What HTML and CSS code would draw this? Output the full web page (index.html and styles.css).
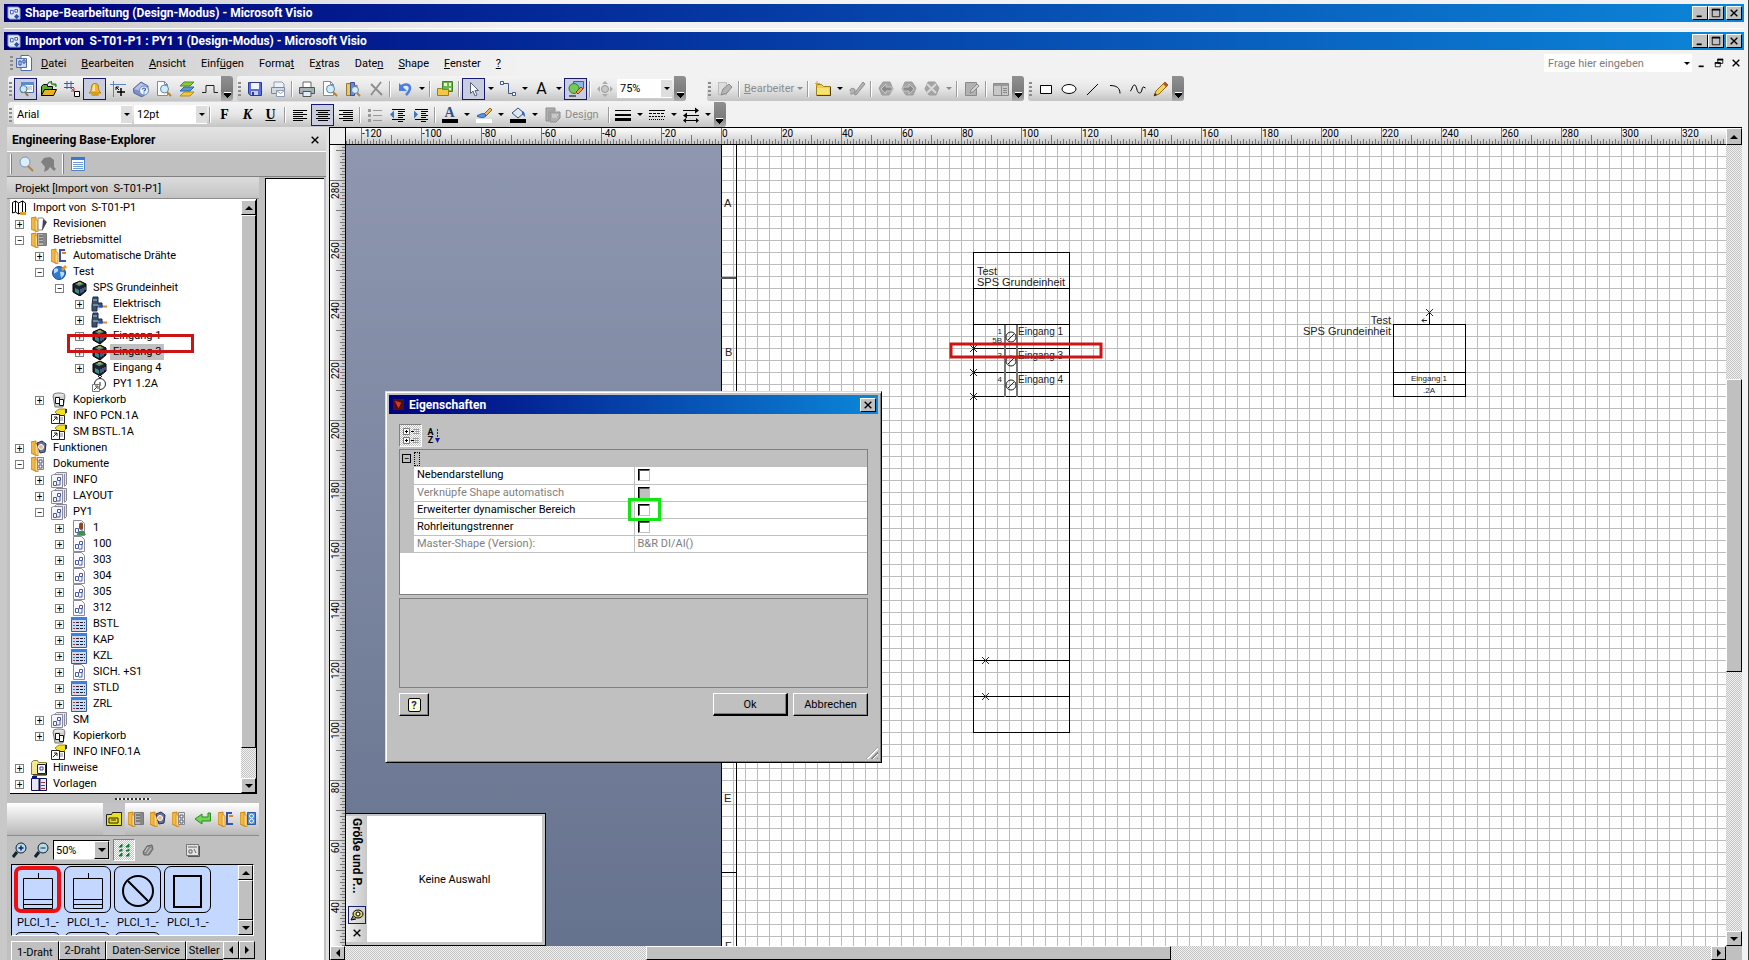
FILE: index.html
```html
<!DOCTYPE html>
<html lang="de">
<head>
  <meta charset="UTF-8" />
  <meta name="viewport" content="width=device-width, initial-scale=1.0" />
  <title>Import von S-T01-P1 - Microsoft Visio</title>
  <link rel="stylesheet" href="styles.css">
</head>
<body>
  <!-- Icon set -->
  <svg class="icon-defs" aria-hidden="true">
    <symbol id="i-visio" viewBox="0 0 16 16"><path d="M1 1h12l2 2v12H3l-2-2z" fill="#dfe6f6" stroke="#6f83b5"/><path d="M4 5h3v4H4zM9 4h3v3H9z" fill="#fff" stroke="#2c4ea0"/><path d="M11 9l3 3-3 3-3-3z" fill="#2c4ea0"/></symbol>
    <symbol id="i-docvisio" viewBox="0 0 16 16"><path d="M5 .5h8l2.500 2.500v12.500H5z" fill="#fff" stroke="#4c6cb0"/><path d="M.5 3.500h10v9H.5z" fill="#c9d7f3" stroke="#4c6cb0"/><path d="M3 6h2v4H3zM7 5h2v3H7z" fill="#fff" stroke="#2a459a"/></symbol>
    <symbol id="i-findwin" viewBox="0 0 16 16"><path d="M3.500 1.500h12v10h-12z" fill="#fff" stroke="#4a70b0"/><path d="M3 1h13v3H3z" fill="#5b8ad0"/><path d="M9 6h5M9 8h5" stroke="#9ab"/><circle cx="5.500" cy="8" r="3.500" fill="#cfe9fb" stroke="#4a7a9a"/><path d="M7 11l3 4" stroke="#a07030" stroke-width="2"/></symbol>
    <symbol id="i-open" viewBox="0 0 16 16"><path d="M.5 14.500v-9l2-2h4v2h5v3" fill="#5ab030" stroke="#000"/><path d="M.5 14.500l3-6h12l-3 6z" fill="#e6b422" stroke="#000"/><path d="M6 4l2-3h3l-1-1m1 1l-1 2M10 3h5v3" fill="#7c3" stroke="#263"/></symbol>
    <symbol id="i-snap" viewBox="0 0 16 16"><path d="M3 0v8M7 0v8M0 2.500h10M0 6.500h10" stroke="#3a5aa8"/><path d="M6 6l4 4M10 7v3H7" stroke="#d33" fill="none"/><path d="M10.500 10.500h5v5h-5z" fill="#fff" stroke="#000"/></symbol>
    <symbol id="i-bell" viewBox="0 0 16 16"><path d="M2 12c3-2 2-5 3-8 1-2 5-2 6 0 1 3 0 6 3 8z" fill="#f2b62c" stroke="#b87a10"/><path d="M6 5c0-1 1-2 2-2v7H5z" fill="#fde69a"/><ellipse cx="8" cy="13.500" rx="4" ry="1.500" fill="#d99a1c"/></symbol>
    <symbol id="i-guide" viewBox="0 0 16 16"><path d="M0 3.500h16M3.500 0v16" stroke="#5b83c8"/><path d="M6 6h3M6 6v3M6 6l3 3" stroke="#000" fill="none"/><path d="M11 7v8M7 11h8" stroke="#000" stroke-width="1.500"/></symbol>
    <symbol id="i-book" viewBox="0 0 16 16"><path d="M0 8l8-7 7 4v6l-6 5-8-4z" fill="#7d90cc" stroke="#56699f"/><path d="M1 8l7-6 6 3-6 5z" fill="#b6c2e8"/><circle cx="11" cy="9.500" r="4.500" fill="#eef4ff" stroke="#6d83bd"/><path d="M9.500 8.500c0-2 3-2 3 0 0 1-1.500 1-1.500 2m0 1v1" stroke="#2a57c0" fill="none" stroke-width="1.200"/></symbol>
    <symbol id="i-preview" viewBox="0 0 16 16"><path d="M1.500.5h7l3 3v11h-10z" fill="#fff" stroke="#7a8aa8"/><path d="M8.500.5v3h3" fill="none" stroke="#7a8aa8"/><circle cx="8.500" cy="8" r="4" fill="#d3ecfa" stroke="#5c86a3"/><path d="M11 11l4 4" stroke="#b98232" stroke-width="2"/></symbol>
    <symbol id="i-layers" viewBox="0 0 16 16"><path d="M1 15l4-4h10l-4 4z" fill="#f0c93c" stroke="#b38b10"/><path d="M1 10l4-4h10l-4 4z" fill="#5b95d8" stroke="#2c64a8"/><path d="M1 5l4-4h10l-4 4z" fill="#8cc83c" stroke="#4f8a18"/></symbol>
    <symbol id="i-pulse" viewBox="0 0 16 16"><path d="M0 11.500h4v-7h8v7h4" fill="none" stroke="#222"/></symbol>
    <symbol id="i-save" viewBox="0 0 16 16"><path d="M1.500 1.500h13v13h-11l-2-2z" fill="#5a6fd8" stroke="#2b3a94"/><path d="M4 2h8v6H4z" fill="#f2f4ff"/><path d="M4 10h7v4H4z" fill="#c9cff0"/><path d="M5 11h2v3H5z" fill="#2b3a94"/></symbol>
    <symbol id="i-mailprint" viewBox="0 0 16 16"><path d="M4 6V1h8l2 2v4" fill="#eef2fa" stroke="#8d9bb4"/><path d="M1.500 6.500h13v6h-13z" fill="#d4d8e0" stroke="#7d8797"/><path d="M6.500 9.500h8v6h-8z" fill="#fff" stroke="#8d9bb4"/><path d="M6.500 9.500l4 3 4-3" fill="none" stroke="#8d9bb4"/></symbol>
    <symbol id="i-print" viewBox="0 0 16 16"><path d="M4 6V1h8v5" fill="#fff" stroke="#666"/><path d="M.5 6.500h15v6H.5z" fill="#a9b2b9" stroke="#4c555c"/><path d="M4 10.500h8v5H4z" fill="#dfeffc" stroke="#555"/><path d="M12 8h2" stroke="#4d4"/></symbol>
    <symbol id="i-research" viewBox="0 0 16 16"><path d="M1.500 2.500h4v12h-4z" fill="#e8c860" stroke="#9a7a28"/><path d="M5.500 1.500h4v13h-4z" fill="#7088c8" stroke="#3a5098"/><path d="M9.500 4h3v6h-3z" fill="#c86040"/><circle cx="10" cy="9" r="3.500" fill="#d3ecfa" stroke="#5c86a3"/><path d="M12 12l3 3" stroke="#b98232" stroke-width="2"/></symbol>
    <symbol id="i-delete" viewBox="0 0 16 16"><path d="M3 3l11 11M13 1L3 14" stroke="#8c8c8c" stroke-width="1.800" fill="none"/></symbol>
    <symbol id="i-undo" viewBox="0 0 16 16"><path d="M4 6c3-4 9-3 9 1 0 3-2 5-4 7" fill="none" stroke="#4a7fe0" stroke-width="2.500"/><path d="M2 2v8h8z" fill="#4a7fe0"/></symbol>
    <symbol id="i-shapes" viewBox="0 0 16 16"><path d="M5.500.5h10v10h-10z" fill="#6cb84c" stroke="#3e7f26"/><path d="M7 2h3v3H7zM12 2h2v3h-2zM12 7h2v2h-2z" fill="#e8f8d8"/><path d="M.5 7.500h4l1 1h6v6H.5z" fill="#f2c648" stroke="#a87c14"/></symbol>
    <symbol id="i-pointer" viewBox="0 0 16 16"><path d="M4.500 1.500v11l2.500-2.500 2 5 2-1-2-4.500h3.500z" fill="#fff" stroke="#566080"/></symbol>
    <symbol id="i-connector" viewBox="0 0 16 16"><path d="M4 2.500h4.500v10h4" fill="none" stroke="#3c5a90"/><path d="M.5.500h3v3h-3zM12.500 11.500h3v3h-3z" fill="#fff" stroke="#3c5a90"/></symbol>
    <symbol id="i-geom" viewBox="0 0 16 16"><path d="M5.500.5h10v7h-10z" fill="#8eb4ee" stroke="#3560a8"/><circle cx="6" cy="7.500" r="5" fill="#74c95a" stroke="#33801f"/><path d="M8 11l5-5 2 2-5 5z" fill="#f0a040" stroke="#a03818"/><path d="M1 15h7" stroke="#000"/></symbol>
    <symbol id="i-pan" viewBox="0 0 16 16"><path d="M8 0l3 3H5zM8 16l3-3H5zM0 8l3-3v6zM16 8l-3-3v6z" fill="#aaa"/><circle cx="8" cy="8" r="3.500" fill="#c8c8c8" stroke="#999"/></symbol>
    <symbol id="i-ink" viewBox="0 0 16 16"><path d="M1.500 1.500h8v12h-8z" fill="#ddd" stroke="#999" stroke-dasharray="1 1"/><path d="M4 14l2-6 6-5 3 3-5 6z" fill="#b4b4b4" stroke="#8c8c8c"/></symbol>
    <symbol id="i-folder" viewBox="0 0 16 16"><path d="M1.500 3.500h5l2 2h7v9h-14z" fill="#f0d040" stroke="#a08018"/><path d="M2 7h12v6H2z" fill="#f6e272"/><path d="M15.500 6v8.500H2" fill="none" stroke="#4c4010"/><path d="M2 0v5M0 2.500h5" stroke="#f0a020"/></symbol>
    <symbol id="i-inkpen" viewBox="0 0 16 16"><path d="M1 10c0-4 6-3 5 0s-4 4-5 2M5 13L14 1l2 2-9 11z" fill="#b4b4b4" stroke="#8c8c8c"/></symbol>
    <symbol id="i-hex" viewBox="0 0 16 16"><path d="M4 1h7l4 6-3 7H5L1 8z" fill="#a4a4a4" stroke="#9c9c9c"/><path d="M2 6h6V3l5 5-5 5v-3H2z" fill="#8a8a8a" stroke="#c8c8c8"/></symbol>
    <symbol id="i-hexx" viewBox="0 0 16 16"><path d="M4 1h7l4 6-3 7H5L1 8z" fill="#a4a4a4" stroke="#9c9c9c"/><path d="M3 3l9 9M12 3l-9 9" stroke="#d8d8d8" stroke-width="2"/></symbol>
    <symbol id="i-note" viewBox="0 0 16 16"><path d="M1.500 1.500h11v13h-11z" fill="#b2b2b2" stroke="#8a8a8a"/><path d="M6 12l1-3 6-6 2 2-6 6z" fill="#d0d0d0" stroke="#8a8a8a"/></symbol>
    <symbol id="i-pane" viewBox="0 0 16 16"><path d="M.5 2.500h15v12H.5z" fill="#c8c8c8" stroke="#8a8a8a"/><path d="M1 3h14v2H1z" fill="#9a9a9a"/><path d="M8.500 5v9M10 7.500h4M10 9.500h4M10 11.500h4" stroke="#8a8a8a"/></symbol>
    <symbol id="i-rect" viewBox="0 0 16 16"><path d="M2.500 4.500h11v8h-11z" fill="#fff" stroke="#000"/></symbol>
    <symbol id="i-ellipse" viewBox="0 0 16 16"><ellipse cx="8" cy="8" rx="7" ry="4.500" fill="#fff" stroke="#000"/></symbol>
    <symbol id="i-line" viewBox="0 0 16 16"><path d="M3 14L14 3" stroke="#000"/></symbol>
    <symbol id="i-arc" viewBox="0 0 16 16"><path d="M3 4.500c6 0 10 2 10 8" stroke="#000" fill="none"/></symbol>
    <symbol id="i-wave" viewBox="0 0 16 16"><path d="M0 10c2 0 2-6 4.500-6s2 8 5 8 2-6 4-6l2 1" stroke="#000" fill="none"/></symbol>
    <symbol id="i-pencil" viewBox="0 0 16 16"><path d="M1 15l2-5 9-9 3 3-9 9z" fill="#f4d25c" stroke="#8c6a10"/><path d="M12 1l3 3-2 2-3-3z" fill="#c05030"/><path d="M1 15l1-3 2 2z" fill="#222"/></symbol>
    <symbol id="i-left" viewBox="0 0 16 16"><path d="M1 3.500h14M1 5.500h10M1 7.500h14M1 9.500h10M1 11.500h14M1 13.500h10" stroke="#000"/></symbol>
    <symbol id="i-center" viewBox="0 0 16 16"><path d="M1 3.500h14M3 5.500h10M1 7.500h14M3 9.500h10M1 11.500h14M3 13.500h10" stroke="#000"/></symbol>
    <symbol id="i-right" viewBox="0 0 16 16"><path d="M1 3.500h14M5 5.500h10M1 7.500h14M5 9.500h10M1 11.500h14M5 13.500h10" stroke="#000"/></symbol>
    <symbol id="i-bullets" viewBox="0 0 16 16"><path d="M6 3.500h9M6 8.500h9M6 13.500h9" stroke="#999"/><path d="M1 2h3v3H1zM1 7h3v3H1zM1 12h3v3H1z" fill="#999"/></symbol>
    <symbol id="i-indentl" viewBox="0 0 16 16"><path d="M2 2.500h13M8 4.500h7M8 6.500h5M8 8.500h7M8 10.500h5M2 12.500h13M8 14.500h5" stroke="#000"/><path d="M0 7.500l4-4v8z" fill="#3a78b8"/></symbol>
    <symbol id="i-indentr" viewBox="0 0 16 16"><path d="M2 2.500h13M8 4.500h7M8 6.500h5M8 8.500h7M8 10.500h5M2 12.500h13M8 14.500h5" stroke="#000"/><path d="M5 7.500l-4-4v8z" fill="#3a78b8"/></symbol>
    <symbol id="i-brush" viewBox="0 0 16 16"><path d="M8 7l6-6 2 2-6 6z" fill="#e8b860" stroke="#906020"/><path d="M1 9c3-2 6-3 8-2l1 2c-2 2-6 2-9 0z" fill="#5b95e8" stroke="#2c5cb0"/><path d="M0 12h16v4H0z" fill="#fff"/></symbol>
    <symbol id="i-fill" viewBox="0 0 16 16"><path d="M2 6l6-5 6 5-6 5z" fill="#dfe9f6" stroke="#3a5078"/><path d="M12 4c3 1 3 4 3 6l-3-3z" fill="#2c64c0"/><path d="M0 12h16v4H0z"/></symbol>
    <symbol id="i-design" viewBox="0 0 16 16"><path d="M1 1h9v3H4v10H1zM5 5h10v6l-4 4H5z" fill="#b0b0b0" stroke="#8e8e8e"/><path d="M7 8h6M7 10h5" stroke="#e0e0e0"/></symbol>
    <symbol id="i-weight" viewBox="0 0 16 16"><path d="M0 3.500h16" stroke="#000"/><path d="M0 8h16" stroke="#000" stroke-width="2"/><path d="M0 12.500h16" stroke="#000" stroke-width="3"/></symbol>
    <symbol id="i-dash" viewBox="0 0 16 16"><path d="M0 3.500h16" stroke="#000"/><path d="M0 6.500h16" stroke="#000" stroke-dasharray="3 1"/><path d="M0 9.500h16" stroke="#000" stroke-dasharray="2 1"/><path d="M0 12.500h16" stroke="#000" stroke-dasharray="1 1"/></symbol>
    <symbol id="i-ends" viewBox="0 0 16 16"><path d="M0 3.500h14M2 8.500h14M1 13.500h14" stroke="#000"/><path d="M16 3.500l-4-3v6zM0 8.500l4-3v6zM16 13.500l-3-2.500v5zM0 13.500l3-2.500v5z"/></symbol>
    <symbol id="i-zoom" viewBox="0 0 16 16"><circle cx="7" cy="6" r="5" fill="#d9effc" stroke="#7a98b0"/><path d="M10 10l5 5" stroke="#b98232" stroke-width="2"/></symbol>
    <symbol id="i-blob" viewBox="0 0 16 16"><path d="M1 6l3-4 6-1 4 3v7l2 2-2 2-4-4-2 3-4 2 1-5z" fill="#808080"/></symbol>
    <symbol id="i-form" viewBox="0 0 16 16"><path d="M1.500 1.500h13v13h-13z" fill="#fff" stroke="#4f86c6"/><path d="M1 1h14v3H1z" fill="#3a78d0"/><path d="M3 6.500h10M3 8.500h10M3 10.500h10M3 12.500h10" stroke="#6fa0d8"/></symbol>
    <!-- tree icons -->
    <symbol id="t-project" viewBox="0 0 16 16"><path d="M1.500 2.500l3-1.500 3 2 4-2 3 2v11l-3-2-4 2-3-2-3 1z" fill="#fff" stroke="#000"/><path d="M4.500 1v11M7.500 3v11M11.500 1v11" stroke="#000"/><path d="M9 12h6v3H9z" fill="#e0a030"/></symbol>
    <symbol id="t-folder" viewBox="0 0 16 16"><path d="M0 2l5-1v11l1 4-6-3z" fill="#f4b840" stroke="#c88418"/><path d="M4 3l3 2v11l-3-2z" fill="#fbd988" stroke="#d89a30"/></symbol>
    <symbol id="t-rev" viewBox="0 0 16 16"><use href="#t-folder"/><path d="M7 2h5l3 4-4 8H7z" fill="#fff" stroke="#888"/><path d="M12 3l4 3-5 9z" fill="#445"/></symbol>
    <symbol id="t-equip" viewBox="0 0 16 16"><use href="#t-folder"/><path d="M6.500 1.500h9v12h-9z" fill="#b4b4b4" stroke="#777"/><path d="M8 4h6M8 7h6M8 10h6" stroke="#444"/><path d="M12 2h3v11h-3z" fill="#888"/></symbol>
    <symbol id="t-wire" viewBox="0 0 16 16"><use href="#t-folder"/><path d="M8 2h6M9 2v11h6" fill="none" stroke="#3850b0" stroke-width="2"/><path d="M11 5h4" stroke="#e08030" stroke-width="2"/></symbol>
    <symbol id="t-globe" viewBox="0 0 16 16"><circle cx="8" cy="9" r="6.500" fill="#2f78d0" stroke="#1d4c92"/><path d="M3 5c3-2 5 0 4 2s-3 1-4 3zM9 8c3-1 5 0 4 3l-3 3z" fill="#b8dcf4"/><path d="M10 5l4-4 2 2-4 4z" fill="#e89828"/></symbol>
    <symbol id="t-device" viewBox="0 0 16 16"><path d="M2 4l7-3 6 3v7l-6 5-7-4z" fill="#18242c" stroke="#000"/><path d="M4 4l5-2 4 2-5 2z" fill="#5c8c78"/><path d="M4 8l4 2v4l-4-2z" fill="#3a8888"/><path d="M10 9v4M12 8v4M14 7v3" stroke="#7c88e0"/><path d="M7 3h3" stroke="#e0c838"/></symbol>
    <symbol id="t-elec" viewBox="0 0 16 16"><path d="M2 1h5v6h4v4H6v4H1V9z" fill="#38506c" stroke="#1c2a3c"/><path d="M2 4h4M2 9h5M8 9v5" stroke="#aec4da"/><path d="M8 10.500h4" stroke="#3050c0" stroke-width="2"/><path d="M12 10.500h4" stroke="#e08830" stroke-width="2"/></symbol>
    <symbol id="t-ref" viewBox="0 0 16 16"><circle cx="9" cy="8" r="5.500" fill="#fff" stroke="#222"/><path d="M7 0l2 2 2-2M9 6v4" stroke="#222" fill="none"/><path d="M1.500 8.500h7v7h-7z" fill="#fff" stroke="#777"/><path d="M3 14l3-3m-2-1h3v3" stroke="#444" fill="none"/></symbol>
    <symbol id="t-bin" viewBox="0 0 16 16"><ellipse cx="8" cy="3" rx="6" ry="2" fill="#e6e6e6" stroke="#777"/><path d="M2 4l2 11h8l2-11" fill="#d0d0d0" stroke="#777"/><path d="M4.500 5.500h4v6h-4zM8.500 7.500h4v6h-4z" fill="#fff" stroke="#111"/></symbol>
    <symbol id="t-link" viewBox="0 0 16 16"><path d="M4 4l4-3h7v4l-3 3-5-1z" fill="#f4e020" stroke="#a08c10"/><path d="M14 1h2v4h-2z" fill="#1c2c90"/><path d="M8.500 7.500h5v8h-5z" fill="#fff" stroke="#222"/><path d="M9 10h3M9 12h3" stroke="#88a"/><path d="M.5 6.500h8v9h-8z" fill="#fff" stroke="#222"/><path d="M2 13l4-4m-3 0h3v3" stroke="#222" fill="none"/></symbol>
    <symbol id="t-func" viewBox="0 0 16 16"><use href="#t-folder"/><path d="M6 3l5-2 4 3-1 8-5 1z" fill="#6a7498" stroke="#29304e"/><circle cx="10" cy="7" r="2.500" fill="#e2b8a0" stroke="#fff"/></symbol>
    <symbol id="t-docs" viewBox="0 0 16 16"><use href="#t-folder"/><path d="M6.500 1.500h6v12h-6z" fill="#e4e6f2" stroke="#888"/><path d="M8 4h3v3H8zM8 9h3v3H8z" fill="#fff" stroke="#557"/></symbol>
    <symbol id="t-sheets" viewBox="0 0 16 16"><path d="M3.500 2.500l2-2h10v12l-2 2" fill="#e4e4ea" stroke="#8a8a98"/><path d="M13.500 2v12" stroke="#8a8a98"/><path d="M.5 3.500l2-1h9v13H.5z" fill="#f4f4fa" stroke="#8a8a98"/><path d="M2.500 9.500h3v4h-3zM6.500 5.500h3v3h-3zM9 9v4H6" fill="none" stroke="#4a5aa0"/></symbol>
    <symbol id="t-sheet" viewBox="0 0 16 16"><path d="M2.500.5h8l3 3v12h-11z" fill="#fbfbfd" stroke="#8a8a98"/><path d="M4.500 8.500h3v4h-3zM8.500 5.500h3v3h-3zM11 9v4H8" fill="none" stroke="#4a5aa0"/></symbol>
    <symbol id="t-user" viewBox="0 0 16 16"><use href="#t-sheet"/><path d="M8 4c1-2 4-2 4 0v5l-3 1z" fill="#8a4a28"/><path d="M6 15l1-4h6l2 4z" fill="#3c9050"/></symbol>
    <symbol id="t-list" viewBox="0 0 16 16"><path d="M.5 1.500h15v14H.5z" fill="#c8dcf8" stroke="#2a5cb0"/><path d="M0 1h16v3H0z" fill="#3f7fe0"/><path d="M5 6.500h9M5 9.500h9M5 12.500h9" stroke="#223" stroke-dasharray="3 1"/><path d="M2 6.500h2M2 12.500h2" stroke="#c03030"/><path d="M2 9.500h2" stroke="#309040"/></symbol>
    <symbol id="t-hint" viewBox="0 0 16 16"><path d="M.5 2.500l2-2h4l1 2h8v12H.5z" fill="#f4e890" stroke="#8c8030"/><path d="M6.500 4.500h8v9h-8z" fill="#fff" stroke="#222"/><path d="M9 7h3v3H9z" fill="none" stroke="#4040b0"/><path d="M15.500 3v12H2" fill="none" stroke="#000"/></symbol>
    <symbol id="t-templ" viewBox="0 0 16 16"><path d="M.5 2.500h15v12H.5z" fill="#e8e8f4" stroke="#101050"/><path d="M1 0h5v3H1z" fill="#101080"/><path d="M8.500 3v11" stroke="#101050" stroke-width="2"/><path d="M10 6.500h4M10 9.500h4M10 12.500h4" stroke="#a03030"/></symbol>
    <symbol id="i-stencil" viewBox="0 0 16 16"><path d="M.5 3.500h5l1-2h9v13H.5z" fill="#e8e020" stroke="#222"/><path d="M3 7h9v5H3zM5 9h5" fill="none" stroke="#222"/></symbol>
    <symbol id="i-back" viewBox="0 0 16 16"><path d="M0 8l7-5v3h6V2h2.500v8H7v3z" fill="#6cd850" stroke="#2c8820"/></symbol>
    <symbol id="i-grid8" viewBox="0 0 16 16"><use href="#t-folder"/><path d="M7.500 1.500h8v12h-8z" fill="#4f8cd8" stroke="#2a5ca0"/><circle cx="11.500" cy="5" r="2" fill="none" stroke="#fff"/><circle cx="11.500" cy="10" r="2" fill="none" stroke="#fff"/></symbol>
    <symbol id="i-zplus" viewBox="0 0 16 16"><circle cx="9" cy="6" r="5" fill="#b8dce4" stroke="#123"/><path d="M6.500 6h5M9 3.500v5" stroke="#102080" stroke-width="1.500"/><path d="M5 10l-4 5" stroke="#123" stroke-width="3"/></symbol>
    <symbol id="i-zminus" viewBox="0 0 16 16"><circle cx="9" cy="6" r="5" fill="#b8dce4" stroke="#123"/><path d="M6.500 6h5" stroke="#102080"/><path d="M5 10l-4 5" stroke="#123" stroke-width="3"/></symbol>
    <symbol id="i-arrange" viewBox="0 0 16 16"><path d="M3 5h3V2zM10 5h3V2zM3 9h3V7zM10 9h3V7zM3 14h3v-3zM10 14h3v-3z" fill="#0a8030" stroke="#0a8030"/></symbol>
    <symbol id="i-eraser" viewBox="0 0 16 16"><path d="M3 10l4-6 5-1 1 4-4 6H4z" fill="#8c8c8c" stroke="#666"/><path d="M5 10l3-5M7 12l4-6" stroke="#ccc"/></symbol>
    <symbol id="i-card" viewBox="0 0 16 16"><path d="M1.500 2.500h12v11h-12z" fill="#e4e4e4" stroke="#777"/><path d="M3 5h9M4 8h3v3H4zM9 7l2 4" stroke="#666" fill="none"/><path d="M14.500 4v10.500H3" fill="none" stroke="#555"/></symbol>
    <symbol id="i-pin" viewBox="0 0 16 16"><ellipse cx="9" cy="7" rx="5" ry="4" fill="#d8d060" stroke="#000"/><circle cx="9" cy="7" r="2" fill="#fff" stroke="#000"/><path d="M4 9l-2 4 5-1" fill="#888" stroke="#000"/></symbol>
    <symbol id="i-cat" viewBox="0 0 16 16"><path d="M.5.500h6v6h-6zM.5 9.500h6v6h-6z" fill="#fff" stroke="#777"/><path d="M2 3.500h3M3.500 2v3M2 12.500h3M3.500 11v3M8 3.500h3M8 12.500h3" stroke="#000"/><path d="M10 1.500h6M12 3.500h4M10 5.500h6M10 10.500h6M12 12.500h4M10 14.500h6" stroke="#999"/></symbol>
    <symbol id="i-min" viewBox="0 0 12 12"><path d="M2 9h6v2H2z"/></symbol>
    <symbol id="i-max" viewBox="0 0 12 12"><path d="M1.500 1.500h9v9h-9z" fill="none" stroke="#000"/><path d="M1 1h10v2H1z"/></symbol>
    <symbol id="i-restore" viewBox="0 0 12 12"><path d="M4.500 1.500h6v5h-6z" fill="none" stroke="#000"/><path d="M4 1h7v2H4zM1 5h7v2H1z"/><path d="M1.500 5.500h6v5h-6z" fill="none" stroke="#000"/></symbol>
    <symbol id="i-x" viewBox="0 0 12 12"><path d="M2 2l8 8M10 2l-8 8" stroke="#000" stroke-width="1.600"/></symbol>
    <symbol id="m-mark" viewBox="0 0 7 7"><path d="M0 0l7 7M7 0L0 7" stroke="#1a1a9c"/></symbol>
  </svg>

  <header class="titlebar back">
    <svg class="ic"><use href="#i-visio"/></svg>
    <span class="caption">Shape-Bearbeitung (Design-Modus) - Microsoft Visio</span>
    <div class="winbtns">
      <button aria-label="Minimieren"><svg><use href="#i-min"/></svg></button><button aria-label="Maximieren"><svg><use href="#i-max"/></svg></button>
      <button class="gap" aria-label="Schließen"><svg><use href="#i-x"/></svg></button>
    </div>
  </header>

  <div class="window">
    <header class="titlebar">
      <svg class="ic"><use href="#i-visio"/></svg>
      <span class="caption">Import von&nbsp; S-T01-P1 : PY1 1 (Design-Modus) - Microsoft Visio</span>
      <div class="winbtns">
        <button aria-label="Minimieren"><svg><use href="#i-min"/></svg></button><button aria-label="Maximieren"><svg><use href="#i-max"/></svg></button>
        <button class="gap" aria-label="Schließen"><svg><use href="#i-x"/></svg></button>
      </div>
    </header>

    <nav class="menubar">
      <i class="grip"></i>
      <svg class="ic"><use href="#i-docvisio"/></svg>
      <a href="#"><u>D</u>atei</a><a href="#"><u>B</u>earbeiten</a><a href="#"><u>A</u>nsicht</a><a href="#">Einf<u>ü</u>gen</a><a href="#">Forma<u>t</u></a><a href="#">E<u>x</u>tras</a><a href="#">Date<u>n</u></a><a href="#"><u>S</u>hape</a><a href="#"><u>F</u>enster</a><a href="#"><u>?</u></a>
      <div class="ask"><input type="text" aria-label="Frage" placeholder="Frage hier eingeben"><i class="caret"></i></div>
      <div class="docbtns">
        <button aria-label="Minimieren"><svg><use href="#i-min"/></svg></button>
        <button aria-label="Wiederherstellen"><svg><use href="#i-restore"/></svg></button>
        <button aria-label="Schließen"><svg><use href="#i-x"/></svg></button>
      </div>
    </nav>

    <div class="toolrow">
      <div class="toolbar">
        <i class="grip"></i>
        <button class="tb on"><svg class="ic"><use href="#i-findwin"/></svg></button>
        <button class="tb"><svg class="ic"><use href="#i-open"/></svg></button>
        <button class="tb"><svg class="ic"><use href="#i-snap"/></svg></button>
        <button class="tb on"><svg class="ic"><use href="#i-bell"/></svg></button>
        <button class="tb"><svg class="ic"><use href="#i-guide"/></svg></button>
        <button class="tb"><svg class="ic"><use href="#i-book"/></svg></button>
        <button class="tb"><svg class="ic"><use href="#i-preview"/></svg></button>
        <button class="tb"><svg class="ic"><use href="#i-layers"/></svg></button>
        <button class="tb"><svg class="ic"><use href="#i-pulse"/></svg></button>
        <button class="chip" aria-label="Optionen"></button>
      </div>
      <div class="toolbar">
        <i class="grip"></i>
        <button class="tb"><svg class="ic"><use href="#i-save"/></svg></button>
        <button class="tb"><svg class="ic"><use href="#i-mailprint"/></svg></button>
        <i class="sep"></i>
        <button class="tb"><svg class="ic"><use href="#i-print"/></svg></button>
        <button class="tb"><svg class="ic"><use href="#i-preview"/></svg></button>
        <button class="tb"><svg class="ic"><use href="#i-research"/></svg></button>
        <button class="tb"><svg class="ic"><use href="#i-delete"/></svg></button>
        <i class="sep"></i>
        <button class="tb"><svg class="ic"><use href="#i-undo"/></svg></button><i class="caret"></i>
        <i class="sep"></i>
        <button class="tb"><svg class="ic"><use href="#i-shapes"/></svg></button>
        <i class="sep"></i>
        <button class="tb on"><svg class="ic"><use href="#i-pointer"/></svg></button><i class="caret"></i>
        <button class="tb"><svg class="ic"><use href="#i-connector"/></svg></button><i class="caret"></i>
        <button class="tb"><span class="letter">A</span></button><i class="caret"></i>
        <button class="tb on"><svg class="ic"><use href="#i-geom"/></svg></button>
        <i class="sep"></i>
        <button class="tb"><svg class="ic"><use href="#i-pan"/></svg></button>
        <div class="combo zoom"><select aria-label="Zoom"><option>75%</option></select><i class="caret"></i></div>
        <button class="chip" aria-label="Optionen"></button>
      </div>
      <div class="toolbar apart">
        <i class="grip"></i>
        <button class="tb"><svg class="ic"><use href="#i-ink"/></svg></button>
        <i class="sep"></i>
        <button class="text-btn" disabled><u>B</u>earbeiter</button><i class="caret off"></i>
        <i class="sep"></i>
        <button class="tb"><svg class="ic"><use href="#i-folder"/></svg></button><i class="caret"></i>
        <button class="tb"><svg class="ic"><use href="#i-inkpen"/></svg></button>
        <i class="sep"></i>
        <button class="tb"><svg class="ic flip"><use href="#i-hex"/></svg></button>
        <button class="tb"><svg class="ic"><use href="#i-hex"/></svg></button>
        <button class="tb"><svg class="ic"><use href="#i-hexx"/></svg></button><i class="caret off"></i>
        <i class="sep"></i>
        <button class="tb"><svg class="ic"><use href="#i-note"/></svg></button>
        <i class="sep"></i>
        <button class="tb"><svg class="ic"><use href="#i-pane"/></svg></button>
        <button class="chip" aria-label="Optionen"></button>
      </div>
      <div class="toolbar">
        <i class="grip"></i>
        <button class="tb"><svg class="ic"><use href="#i-rect"/></svg></button>
        <button class="tb"><svg class="ic"><use href="#i-ellipse"/></svg></button>
        <button class="tb"><svg class="ic"><use href="#i-line"/></svg></button>
        <button class="tb"><svg class="ic"><use href="#i-arc"/></svg></button>
        <button class="tb"><svg class="ic"><use href="#i-wave"/></svg></button>
        <button class="tb"><svg class="ic"><use href="#i-pencil"/></svg></button>
        <button class="chip" aria-label="Optionen"></button>
      </div>
    </div>

    <div class="toolrow">
      <div class="toolbar">
        <i class="grip"></i>
        <div class="combo font"><select aria-label="Schriftart"><option>Arial</option></select><i class="caret"></i></div>
        <div class="combo size"><select aria-label="Schriftgrad"><option>12pt</option></select><i class="caret"></i></div>
        <i class="sep"></i>
        <button class="tb"><b class="fmt">F</b></button>
        <button class="tb"><b class="fmt italic">K</b></button>
        <button class="tb"><b class="fmt under">U</b></button>
        <i class="sep"></i>
        <button class="tb"><svg class="ic"><use href="#i-left"/></svg></button>
        <button class="tb on"><svg class="ic"><use href="#i-center"/></svg></button>
        <button class="tb"><svg class="ic"><use href="#i-right"/></svg></button>
        <i class="sep"></i>
        <button class="tb"><svg class="ic"><use href="#i-bullets"/></svg></button>
        <button class="tb"><svg class="ic"><use href="#i-indentl"/></svg></button>
        <button class="tb"><svg class="ic"><use href="#i-indentr"/></svg></button>
        <i class="sep"></i>
        <button class="tb"><b class="fontcolor">A</b></button><i class="caret"></i>
        <button class="tb"><svg class="ic"><use href="#i-brush"/></svg></button><i class="caret"></i>
        <button class="tb"><svg class="ic"><use href="#i-fill"/></svg></button><i class="caret"></i>
        <button class="text-btn design" disabled><svg class="ic"><use href="#i-design"/></svg><span>Des<u>i</u>gn</span></button>
        <i class="sep"></i>
        <button class="tb"><svg class="ic"><use href="#i-weight"/></svg></button><i class="caret"></i>
        <button class="tb"><svg class="ic"><use href="#i-dash"/></svg></button><i class="caret"></i>
        <button class="tb"><svg class="ic"><use href="#i-ends"/></svg></button><i class="caret"></i>
        <button class="chip" aria-label="Optionen"></button>
      </div>
    </div>

    <main class="work">
      <!-- Explorer -->
      <aside class="explorer">
        <div class="panel-title"><h2>Engineering Base-Explorer</h2><button aria-label="Schließen"><svg><use href="#i-x"/></svg></button></div>
        <div class="panel-tools">
          <i class="bar"></i>
          <button><svg class="ic"><use href="#i-zoom"/></svg></button>
          <button><svg class="ic"><use href="#i-blob"/></svg></button>
          <i class="bar"></i>
          <button><svg class="ic"><use href="#i-form"/></svg></button>
        </div>
        <div class="panel-body">
          <div class="project">
            <h3>Projekt [Import von&nbsp; S-T01-P1]</h3>
            <div class="treebox">
              <ul class="tree" id="tree"></ul>
              <div class="vscroll tree-scroll"><button class="up" aria-label="Nach oben"></button><i class="thumb"></i><i class="track"></i><button class="down" aria-label="Nach unten"></button></div>
              <i class="mark red mark-tree"></i>
            </div>
            <div class="splitter"><i></i></div>
            <div class="quick">
              <button class="on"><svg class="ic"><use href="#i-stencil"/></svg></button>
              <button><svg class="ic"><use href="#t-equip"/></svg></button>
              <button><svg class="ic"><use href="#t-func"/></svg></button>
              <button><svg class="ic"><use href="#t-docs"/></svg></button>
              <button class="wide"><svg class="ic"><use href="#i-back"/></svg></button>
              <button><svg class="ic"><use href="#t-wire"/></svg></button>
              <button><svg class="ic"><use href="#i-grid8"/></svg></button>
            </div>
            <div class="zoomrow">
              <button><svg class="ic"><use href="#i-zplus"/></svg></button>
              <button><svg class="ic"><use href="#i-zminus"/></svg></button>
              <div class="classic"><select aria-label="Vorschau-Zoom"><option>50%</option></select><i></i></div>
              <button class="pressed"><svg class="ic"><use href="#i-arrange"/></svg></button>
              <button><svg class="ic"><use href="#i-eraser"/></svg></button>
              <button class="far"><svg class="ic"><use href="#i-card"/></svg></button>
            </div>
            <div class="stencil">
              <div class="masters">
                <figure class="sel"><svg viewBox="0 0 47 47"><path d="M9.500 12.500h29v30h-29zM9 33.500h29M9 38.500h29M24.500 7v6" fill="none" stroke="#000"/></svg><figcaption>PLCI_1_-</figcaption></figure>
                <figure><svg viewBox="0 0 47 47"><path d="M9.500 12.500h29v30h-29zM9 33.500h29M9 38.500h29M24.500 7v6" fill="none" stroke="#000"/></svg><figcaption>PLCI_1_-</figcaption></figure>
                <figure><svg viewBox="0 0 47 47"><path d="M14 15l20 20" stroke="#000" stroke-width="2"/><circle cx="24" cy="25" r="15" fill="none" stroke="#000" stroke-width="2"/></svg><figcaption>PLCI_1_-</figcaption></figure>
                <figure><svg viewBox="0 0 47 47"><path d="M10 10h27v31H10z" fill="none" stroke="#000" stroke-width="2"/></svg><figcaption>PLCI_1_-</figcaption></figure>
                <figure></figure><figure></figure><figure></figure>
              </div>
              <div class="vscroll"><button class="up" aria-label="Nach oben"></button><i class="thumb"></i><button class="down" aria-label="Nach unten"></button></div>
            </div>
            <div class="tabs">
              <button class="active">1-Draht</button><button>2-Draht</button><button>Daten-Service</button><button class="cut">Steller</button>
              <span class="tabnav"><button class="prev" aria-label="Zurück"></button><button class="next" aria-label="Weiter"></button></span>
            </div>
          </div>
          <div class="side"></div>
        </div>
      </aside>

      <!-- Drawing area -->
      <section class="drawing">
        <div class="corner"></div>
        <svg class="hruler" id="hruler">
          <defs><pattern id="hticks" x="375" width="60" height="17" patternUnits="userSpaceOnUse"><path id="htickpath" stroke="#777" shape-rendering="crispEdges"/></pattern></defs>
          <rect width="100%" height="17" fill="url(#hticks)"/>
        </svg>
        <button class="scroll-up" aria-label="Nach oben"></button>
        <svg class="vruler" id="vruler">
          <defs><pattern id="vticks" y="35" width="16" height="60" patternUnits="userSpaceOnUse"><path id="vtickpath" stroke="#777" shape-rendering="crispEdges"/></pattern></defs>
          <rect width="16" height="100%" fill="url(#vticks)"/>
        </svg>
        <div class="canvas">
          <svg class="sheet">
            <defs>
              <pattern id="grid" width="12" height="12" patternUnits="userSpaceOnUse"><path d="M.5 0v12M0 .5h12" stroke="#bcbcbc" shape-rendering="crispEdges"/></pattern>
            </defs>
            <g transform="translate(375 -1)">
              <rect width="100%" height="100%" y="1" fill="#fff"/>
              <rect width="100%" height="100%" y="1" fill="url(#grid)"/>
              <g fill="none" stroke="#000" shape-rendering="crispEdges">
                <path d="M.5 0v820M15.500 0v820M0 728.500h15"/>
                <path d="M0 133.500h15" stroke="#555" stroke-width="2"/>
                <path d="M252.500 108.500h96v480h-96zM252 144.500h96M252 180.500h96M252 204.500h96M252 228.500h96M252 252.500h96M252 516.500h96M252 552.500h96"/>
                <path d="M284 181v72M296 181v72" stroke="#777" stroke-width="2"/>
                <path d="M672.500 180.500h72v72h-72zM672 228.500h72M672 240.500h72M708.500 168v12"/>
              </g>
              <g fill="none" stroke="#222">
                <circle cx="290" cy="193" r="5"/><path d="M287 196l6-6"/>
                <circle cx="290" cy="217" r="5"/><path d="M287 220l6-6"/>
                <circle cx="290" cy="241" r="5"/><path d="M287 244l6-6"/>
                <path d="M706 176.500h-5m2-2l-2 2 2 2"/>
              </g>
              <g class="zone"><text x="3" y="63">A</text><text x="4" y="212">B</text><text x="3" y="658">E</text><text x="4" y="806">F</text></g>
              <g class="lbl"><text x="256" y="131">Test</text><text x="256" y="142">SPS Grundeinheit</text>
                <text x="670" y="180" text-anchor="end">Test</text><text x="670" y="191" text-anchor="end">SPS Grundeinheit</text></g>
              <g class="pin"><text x="297" y="191">Eingang 1</text><text x="297" y="215">Eingang 3</text><text x="297" y="239">Eingang 4</text></g>
              <g class="tiny"><text x="281" y="190" text-anchor="end">1</text><text x="281" y="199" text-anchor="end">5B</text><text x="281" y="214" text-anchor="end">3</text><text x="281" y="238" text-anchor="end">4</text>
                <text x="708" y="237" text-anchor="middle">Eingang 1</text><text x="708" y="249" text-anchor="middle">.2A</text></g>
              <g><use href="#m-mark" x="249" y="201" width="7" height="7"/><use href="#m-mark" x="249" y="225" width="7" height="7"/><use href="#m-mark" x="249" y="249" width="7" height="7"/><use href="#m-mark" x="261" y="513" width="7" height="7"/><use href="#m-mark" x="261" y="549" width="7" height="7"/><use href="#m-mark" x="705" y="165" width="7" height="7"/></g>
              <rect x="230" y="200" width="150" height="13" fill="none" stroke="#cc1414" stroke-width="3"/>
            </g>
          </svg>
          <div class="sizewin">
            <div class="sizewin-bar"><span>Größe und P...</span><button class="on"><svg class="ic"><use href="#i-pin"/></svg></button><button><svg><use href="#i-x"/></svg></button></div>
            <p>Keine Auswahl</p>
          </div>
        </div>
        <div class="vscroll canvas-scroll"><i class="track before"></i><i class="thumb"></i><i class="track after"></i><button class="down" aria-label="Nach unten"></button></div>
        <div class="hscroll"><button class="prev" aria-label="Nach links"></button><i class="track before"></i><i class="thumb"></i><i class="track after"></i><button class="next" aria-label="Nach rechts"></button><i class="end"></i></div>
      </section>
    </main>
  </div>

  <!-- Eigenschaften dialog -->
  <div class="dialog" role="dialog" aria-labelledby="dlg-title">
    <div class="dlg-title">
      <svg viewBox="0 0 12 12"><path d="M0 0h12v12H0z" fill="#5a0c0c"/><path d="M2 2l7 2-3 6z" fill="#d43a2c"/><path d="M8 1h3v9z" fill="#222"/></svg>
      <span id="dlg-title">Eigenschaften</span>
      <button aria-label="Schließen"><svg><use href="#i-x"/></svg></button>
    </div>
    <div class="dlg-tools">
      <button class="pressed" aria-label="Kategorien"><svg class="ic"><use href="#i-cat"/></svg></button>
      <button aria-label="Alphabetisch"><span class="az">A<br>Z</span><svg class="azarrow" viewBox="0 0 5 16"><path d="M2.500 1v12" stroke="#1c1c9c" stroke-dasharray="2 1"/><path d="M0 10h5l-2.500 5z" fill="#1c1c9c"/></svg></button>
    </div>
    <div class="props">
      <div class="cat"><i class="box">−</i><i class="focus"></i></div>
      <table>
        <tr><th><label for="p1">Nebendarstellung</label></th><td><input type="checkbox" id="p1"></td></tr>
        <tr class="off"><th><label for="p2">Verknüpfe Shape automatisch</label></th><td><input type="checkbox" id="p2" disabled></td></tr>
        <tr><th><label for="p3">Erweiterter dynamischer Bereich</label></th><td><input type="checkbox" id="p3"><i class="mark green"></i></td></tr>
        <tr><th><label for="p4">Rohrleitungstrenner</label></th><td><input type="checkbox" id="p4"></td></tr>
        <tr class="off"><th>Master-Shape (Version):</th><td>B&amp;R DI/AI()</td></tr>
      </table>
    </div>
    <div class="desc"></div>
    <div class="dlg-buttons">
      <button class="help" aria-label="Hilfe"><span>?</span></button>
      <button class="btn default">Ok</button>
      <button class="btn">Abbrechen</button>
    </div>
    <i class="sizegrip"></i>
  </div>

  <script src="script.js"></script>
</body>
</html>
```
FILE: styles.css
```css
*, *::before, *::after {
  box-sizing: border-box;
}
body {
  margin: 0;
  height: 100vh;
  overflow: hidden;
  display: flex;
  flex-direction: column;
  padding: 4px 4px 0;
  background: linear-gradient(to right, #c8c8c8, #f2f2f2 30%);
  border-right: 1px solid #404040;
  font-family: Roboto, "Liberation Sans", sans-serif;
  font-size: 11px;
  color: #000;
}
button, input, select {
  font: inherit;
  color: inherit;
  margin: 0;
  padding: 0;
  border: 0;
  background: none;
}
i {
  font-style: normal;
}
h2, h3, p, ul, figure {
  margin: 0;
  padding: 0;
}
.icon-defs {
  position: absolute;
  width: 0;
  height: 0;
}
.ic {
  width: 16px;
  height: 16px;
  flex: none;
  display: block;
}
.flip {
  transform: scaleX(-1);
}

/* title bars */
.titlebar {
  flex: none;
  height: 18px;
  display: flex;
  align-items: center;
  gap: 4px;
  padding: 0 2px 0 3px;
  background: linear-gradient(to right, #00007c, #0c86d8);
}
.titlebar.back {
  margin-bottom: 6px;
}
.titlebar .ic {
  width: 14px;
  height: 14px;
}
.caption {
  flex: 1;
  color: #fff;
  font-weight: bold;
  font-size: 12px;
  white-space: pre;
}
.winbtns {
  display: flex;
}
.winbtns button, .dlg-title button {
  width: 16px;
  height: 14px;
  display: flex;
  align-items: center;
  justify-content: center;
  background: #c0c0c0;
  border: 1px solid;
  border-color: #fff #000 #000 #fff;
}
.winbtns .gap {
  margin-left: 2px;
}
.winbtns svg, .dlg-title button svg {
  width: 10px;
  height: 10px;
}
.window {
  flex: 1;
  min-height: 0;
  display: flex;
  flex-direction: column;
  border-top: 1px solid #fff;
  padding-top: 3px;
}

/* menu */
.menubar {
  flex: none;
  height: 26px;
  display: flex;
  align-items: center;
  padding-left: 5px;
}
.menubar .ic {
  margin: 0 2px 0 1px;
}
.menubar a {
  color: #000;
  text-decoration: none;
  padding: 0 8px 0 7px;
}
.grip {
  flex: none;
  width: 3px;
  height: 14px;
  margin: 0 2px 0 1px;
  background: repeating-linear-gradient(#8c8c8c 0 2px, transparent 2px 4px);
}
.ask {
  margin-left: auto;
  width: 148px;
  height: 18px;
  display: flex;
  align-items: center;
  background: #fff;
}
.ask input {
  flex: 1;
  min-width: 0;
  padding-left: 4px;
}
.ask input::placeholder {
  color: #7c7c7c;
  opacity: 1;
}
.docbtns {
  display: flex;
  gap: 5px;
  padding: 0 2px 0 4px;
}
.docbtns svg, .panel-title svg, .sizewin svg:not(.ic) {
  width: 10px;
  height: 10px;
  display: block;
}
.docbtns button {
  padding: 0 1px;
}

/* toolbars */
.toolrow {
  flex: none;
  height: 26px;
  display: flex;
  gap: 4px;
  padding-left: 4px;
}
.toolrow + .toolrow {
  height: 25px;
}
.toolbar {
  height: 25px;
  display: flex;
  align-items: center;
  border-radius: 3px;
  background: linear-gradient(#f4f4f4, #e6e6e6 50%, #c4c4c4);
}
.toolbar.apart {
  margin-left: 17px;
}
.tb {
  width: 23px;
  height: 22px;
  display: flex;
  align-items: center;
  justify-content: center;
}
.tb.on {
  background: #c8cde0;
  border: 1px solid #1a1a70;
}
.sep {
  width: 1px;
  height: 16px;
  margin: 0 3px 0 2px;
  background: #9c9c9c;
  box-shadow: 1px 0 #fff;
}
.caret {
  flex: none;
  width: 11px;
  display: flex;
  justify-content: center;
}
.caret::after {
  content: "";
  width: 6px;
  border: 3px solid transparent;
  border-top-color: #000;
  border-bottom: 0;
}
.caret.off::after {
  border-top-color: #8c8c8c;
}
.chip {
  align-self: stretch;
  width: 12px;
  border-radius: 0 3px 3px 0;
  background: linear-gradient(#909090, #7c7c7c 60%, #b0b0b0);
  display: flex;
  justify-content: center;
  align-items: flex-end;
  padding-bottom: 3px;
}
.chip::after {
  content: "";
  width: 7px;
  height: 6px;
  background: linear-gradient(#fff 0 1px, transparent 1px), conic-gradient(from -45deg at 50% 100%, #000 90deg, transparent 0);
}
.letter {
  font-size: 16px;
}
.text-btn {
  color: #8c8c8c;
  padding-left: 2px;
  font-size: 11px;
}
.text-btn.design {
  display: flex;
  align-items: center;
  gap: 4px;
  padding: 0 7px 0 5px;
}
.fmt, .fontcolor {
  font-family: "Liberation Serif", serif;
  font-size: 14px;
}
.italic {
  font-style: italic;
}
.under {
  text-decoration: underline;
}
.fontcolor {
  width: 16px;
  line-height: 13px;
  color: #34508c;
  border-bottom: 4px solid #000;
}
.combo {
  height: 19px;
  display: flex;
  align-items: center;
  background: #fff;
}
.combo select {
  flex: 1;
  min-width: 0;
  height: 19px;
  padding-left: 3px;
  appearance: none;
}
.combo .caret {
  height: 17px;
  align-items: center;
  background: #dedede;
}
.combo.zoom {
  width: 55px;
  margin: 0 2px 0 1px;
}
.combo.font {
  width: 118px;
  margin-right: 2px;
}
.combo.size {
  width: 73px;
}

/* explorer */
.work {
  flex: 1;
  min-height: 0;
  display: flex;
}
.explorer {
  flex: none;
  width: 319px;
  margin-left: 3px;
  display: flex;
  flex-direction: column;
}
.panel-title {
  height: 24px;
  display: flex;
  align-items: center;
  justify-content: space-between;
  padding: 2px 6px 0 5px;
  background: linear-gradient(#e4e4e4, #d0d0d0);
}
.panel-title h2 {
  font-size: 12px;
}
.panel-tools {
  height: 26px;
  display: flex;
  align-items: center;
  gap: 6px;
  padding-left: 3px;
  background: #c0c0c0;
  border-top: 1px solid #fff;
  border-bottom: 1px solid #808080;
}
.bar {
  width: 2px;
  height: 20px;
  border-left: 1px solid #fff;
  border-right: 1px solid #808080;
}
.panel-body {
  flex: 1;
  min-height: 0;
  display: flex;
  background: #c0c0c0;
}
.project {
  width: 252px;
  min-height: 0;
  display: flex;
  flex-direction: column;
}
.project h3 {
  flex: none;
  height: 22px;
  padding: 5px 8px 0;
  font-size: 11px;
  font-weight: normal;
  background: linear-gradient(#dcdcdc, #c4c4c4);
  border-bottom: 1px solid #8c8c8c;
}
.side {
  flex: 1;
  margin: 1px 2px 0 6px;
  background: #fff;
  border-left: 1px solid #000;
  border-top: 1px solid #000;
}
.treebox {
  position: relative;
  flex: 1;
  min-height: 0;
  margin: 0 2px 0 3px;
  padding-top: 1px;
  display: flex;
  background: #fff;
  border-right: 1px solid #000;
  border-bottom: 1px solid #000;
}
.tree {
  flex: 1;
  overflow: hidden;
  list-style: none;
}
.tree li {
  height: 16px;
  display: flex;
  align-items: center;
  white-space: pre;
}
.tree .ic {
  margin-right: 3px;
}
.tree .name {
  padding: 1px 3px;
  line-height: 14px;
}
.tree .picked {
  background: #c0c0c0;
}
.tree .lv0 { padding-left: 1px; }
.tree .lv1 { padding-left: 5px; }
.tree .lv2 { padding-left: 25px; }
.tree .lv3 { padding-left: 45px; }
.tree .lv4 { padding-left: 65px; }
.box {
  flex: none;
  width: 9px;
  height: 9px;
  margin-right: 7px;
  border: 1px solid #808080;
  font-size: 10px;
  line-height: 7px;
  text-align: center;
}
.box.none {
  visibility: hidden;
}
.mark {
  position: absolute;
  border: 3px solid #cc1414;
}
.mark-tree {
  left: 57px;
  top: 135px;
  width: 127px;
  height: 19px;
}

/* scrollbars */
.vscroll {
  flex: none;
  width: 15px;
  display: flex;
  flex-direction: column;
}
.vscroll button, .hscroll button, .tabnav button, .scroll-up {
  flex: none;
  width: 15px;
  height: 15px;
  display: flex;
  align-items: center;
  justify-content: center;
  background: #c0c0c0;
  border: 1px solid;
  border-color: #fff #000 #000 #fff;
}
.vscroll button::after, .hscroll button::after, .tabnav button::after, .scroll-up::after {
  content: "";
  border: 4px solid transparent;
}
.up::after, .scroll-up::after {
  border-bottom-color: #000 !important;
  border-top: 0 !important;
}
.down::after {
  border-top-color: #000 !important;
  border-bottom: 0 !important;
}
.prev::after {
  border-right-color: #000 !important;
  border-left: 0 !important;
}
.next::after {
  border-left-color: #000 !important;
  border-right: 0 !important;
}
.thumb {
  flex: 1;
  background: #c0c0c0;
  border: 1px solid;
  border-color: #fff #000 #000 #fff;
}
.track {
  background: repeating-conic-gradient(#c4c4c4 0 25%, #f0f0f0 0 50%) 0 0 / 2px 2px;
}
.tree-scroll .track {
  height: 30px;
}

.splitter {
  flex: none;
  height: 9px;
  display: flex;
  justify-content: center;
  align-items: center;
}
.splitter i {
  width: 36px;
  height: 2px;
  background: repeating-linear-gradient(to right, #333 0 2px, #eee 2px 4px);
}
.quick {
  flex: none;
  height: 33px;
  display: flex;
  align-items: stretch;
  justify-content: flex-end;
  background: linear-gradient(#fff, #b8b8b8);
  border-bottom: 1px solid #8c8c8c;
}
.quick button {
  width: 22px;
  display: flex;
  align-items: center;
  justify-content: center;
}
.quick .on {
  background: #c4c4c8;
}
.quick .wide {
  width: 24px;
}
.zoomrow {
  flex: none;
  height: 28px;
  display: flex;
  align-items: center;
  padding: 0 2px;
}
.zoomrow button {
  width: 22px;
  height: 22px;
  display: flex;
  align-items: center;
  justify-content: center;
}
.zoomrow .pressed {
  margin: 0 2px 0 3px;
}
.zoomrow .far {
  margin-left: 23px;
}
.pressed {
  background: repeating-conic-gradient(#c0c0c0 0 25%, #fff 0 50%) 0 0 / 2px 2px;
  border: 1px solid;
  border-color: #808080 #fff #fff #808080;
}
.classic {
  width: 57px;
  height: 20px;
  display: flex;
  background: #fff;
  border: 1px solid;
  border-color: #000 #dcdcdc #dcdcdc #000;
}
.classic select {
  flex: 1;
  min-width: 0;
  padding-left: 2px;
  appearance: none;
}
.classic i {
  width: 15px;
  display: flex;
  align-items: center;
  justify-content: center;
  background: #c0c0c0;
  border: 1px solid;
  border-color: #fff #000 #000 #fff;
}
.classic i::after {
  content: "";
  border: 4px solid transparent;
  border-top-color: #000;
  border-bottom: 0;
}
.stencil {
  flex: none;
  height: 72px;
  margin: 0 5px 0 4px;
  display: flex;
  background: #c4d8ff;
  border: 1px solid;
  border-color: #000 #fff #fff #000;
}
.masters {
  flex: 1;
  display: grid;
  grid-template-columns: repeat(4, 47px);
  grid-auto-rows: 64px;
  gap: 2px 3px;
  overflow: hidden;
  padding: 1px 0 0 2px;
}
.masters figure::before {
  content: "";
  display: block;
  height: 47px;
  border: 1px solid #000;
  border-radius: 7px;
}
.masters .sel::before {
  border: 4px solid #ee1010;
}
.masters svg {
  display: block;
  width: 47px;
  height: 47px;
  margin-top: -47px;
}
.masters figcaption {
  padding: 3px 0 0 3px;
  white-space: nowrap;
}
.tabs {
  flex: none;
  height: 24px;
  display: flex;
  align-items: flex-start;
  padding: 5px 4px 0;
}
.tabs > button {
  height: 19px;
  padding: 0 5px;
  border: 1px solid;
  border-color: #fff #000 #000 #fff;
  white-space: nowrap;
}
.tabs > .active {
  padding-top: 3px;
  border-bottom: 0;
}
.tabs > .cut {
  flex: 1;
  min-width: 0;
  padding: 0 0 0 2px;
  border-right: 0;
  text-align: left;
}
.tabnav {
  display: flex;
}
.tabnav button {
  width: 16px;
  height: 18px;
}

/* drawing */
.drawing {
  flex: 1;
  min-width: 0;
  margin: 0 2px 0 3px;
  display: grid;
  grid-template: 17px 1fr 14px / 16px 1fr 16px;
  border-left: 1px solid #000;
  border-top: 1px solid #000;
}
.corner {
  background: #f0f0f0;
  border-right: 1px solid #000;
  border-bottom: 1px solid #000;
}
.hruler {
  width: 100%;
  height: 17px;
  background: linear-gradient(#fff, #c8c8c8);
  border-bottom: 1px solid #000;
}
.vruler {
  width: 16px;
  height: 100%;
  background: linear-gradient(to right, #fff, #c8c8c8);
  border-right: 1px solid #000;
}
.hruler text, .vruler text {
  font-size: 10px;
}
.scroll-up {
  width: 16px;
  height: 17px;
}
.canvas {
  position: relative;
  overflow: hidden;
  background: linear-gradient(#8f97b0, #66738e);
}
.sheet {
  position: absolute;
  width: 100%;
  height: 100%;
}
.sheet text {
  font-family: "Liberation Sans", sans-serif;
  fill: #222;
}
.zone {
  font-size: 11px;
}
.lbl {
  font-size: 11px;
}
.pin {
  font-size: 10px;
}
.tiny {
  font-size: 8px;
}
.canvas-scroll {
  width: 16px;
}
.canvas-scroll button {
  width: 16px;
}
.canvas-scroll .before {
  flex: 235;
}
.canvas-scroll .thumb {
  flex: 291;
}
.canvas-scroll .after {
  flex: 260;
}
.hscroll {
  grid-column: 1 / -1;
  display: flex;
}
.hscroll button {
  height: 14px;
}
.hscroll .before {
  flex: 302;
}
.hscroll .thumb {
  flex: 524;
}
.hscroll .after {
  flex: 542;
}
.hscroll .end {
  width: 16px;
  background: #c0c0c0;
}
.sizewin {
  position: absolute;
  left: 0;
  bottom: 0;
  width: 200px;
  height: 133px;
  display: flex;
  background: #c4c4c4;
  border: 1px solid #000;
  border-left: 0;
  padding: 2px 3px 3px 0;
}
.sizewin p {
  flex: 1;
  display: flex;
  align-items: center;
  justify-content: center;
  background: #fff;
}
.sizewin-bar {
  width: 21px;
  display: flex;
  flex-direction: column;
  align-items: center;
  background: linear-gradient(to right, #f0f0f0, #c8c8c8);
}
.sizewin-bar span {
  flex: 1;
  writing-mode: vertical-rl;
  font-weight: bold;
  font-size: 12px;
  padding-top: 2px;
}
.sizewin-bar button {
  width: 18px;
  height: 18px;
  display: flex;
  align-items: center;
  justify-content: center;
}
.sizewin-bar .on {
  border: 1px solid #1a1a70;
}

/* dialog */
.dialog {
  position: absolute;
  left: 385px;
  top: 391px;
  width: 497px;
  height: 372px;
  padding: 3px;
  background: #c0c0c0;
  border: 1px solid;
  border-color: #dcdcdc #000 #000 #dcdcdc;
  box-shadow: inset 1px 1px #fff, inset -1px -1px #808080;
}
.dlg-title {
  height: 19px;
  display: flex;
  align-items: center;
  gap: 5px;
  padding: 0 2px 0 4px;
  background: linear-gradient(to right, #00007c, #0c86d8);
  color: #fff;
  font-weight: bold;
  font-size: 12px;
}
.dlg-title span {
  flex: 1;
}
.dlg-title > svg {
  width: 11px;
  height: 11px;
}
.dlg-tools {
  display: flex;
  padding: 10px 10px 2px;
}
.dlg-tools button {
  width: 23px;
  height: 23px;
  display: flex;
  align-items: center;
  justify-content: center;
}
.az {
  font-size: 9px;
  font-weight: bold;
  line-height: 8px;
}
.azarrow {
  flex: none;
  width: 5px;
  height: 16px;
  margin-left: 1px;
}
.props {
  height: 146px;
  margin: 0 10px;
  background: #fff;
  border: 1px solid #808080;
}
.cat {
  height: 17px;
  display: flex;
  align-items: center;
  padding-left: 2px;
  background: #c0c0c0;
}
.cat .box {
  margin-right: 3px;
  border-color: #000;
}
.focus {
  width: 6px;
  height: 14px;
  border: 1px dotted #000;
}
.props table {
  width: 100%;
  border-collapse: collapse;
  table-layout: fixed;
}
.props tr {
  height: 17px;
}
.props th, .props td {
  height: 17px;
  padding: 0 3px;
  line-height: 14px;
  font-weight: normal;
  text-align: left;
  border-bottom: 1px solid #c0c0c0;
}
.props th {
  width: 227px;
  border-left: 14px solid #c0c0c0;
  border-right: 1px solid #c0c0c0;
}
.props td {
  position: relative;
}
.props .off {
  color: #808080;
}
.props input {
  display: block;
  width: 12px;
  height: 12px;
  appearance: none;
  background: #fff;
  border: 1px solid;
  border-color: #000 #c0c0c0 #c0c0c0 #000;
  box-shadow: inset 1px 1px #555;
}
.props input:disabled {
  background: #c0c0c0;
}
.mark.green {
  left: -7px;
  top: -4px;
  width: 33px;
  height: 23px;
  border-color: #14e614;
  z-index: 1;
}
.desc {
  height: 90px;
  margin: 3px 10px 5px;
  border: 1px solid #808080;
}
.dlg-buttons {
  display: flex;
  gap: 5px;
  padding: 0 10px;
}
.dlg-buttons button {
  height: 23px;
  border: 1px solid;
  border-color: #fff #000 #000 #fff;
  box-shadow: inset -1px -1px #808080;
}
.dlg-buttons .help {
  width: 30px;
  margin-right: auto;
}
.help span {
  display: inline-block;
  width: 13px;
  height: 14px;
  line-height: 13px;
  background: #ffffd0;
  border: 1px solid #000;
  border-radius: 2px;
  color: #1c1c9c;
  font-weight: bold;
}
.dlg-buttons .btn {
  width: 75px;
}
.dlg-buttons .default {
  border-width: 1px 2px 2px 1px;
}
.sizegrip {
  position: absolute;
  right: 3px;
  bottom: 3px;
  width: 12px;
  height: 12px;
  background: repeating-linear-gradient(135deg, #808080 0 1px, #fff 1px 2px, #c0c0c0 2px 4px);
  clip-path: polygon(100% 0, 100% 100%, 0 100%);
}
```
FILE: script.js
```js
// level, expander, icon, label
const nodes = [
  [0, "", "project", "Import von  S-T01-P1"],
  [1, "+", "rev", "Revisionen"],
  [1, "-", "equip", "Betriebsmittel"],
  [2, "+", "wire", "Automatische Drähte"],
  [2, "-", "globe", "Test"],
  [3, "-", "device", "SPS Grundeinheit"],
  [4, "+", "elec", "Elektrisch"],
  [4, "+", "elec", "Elektrisch"],
  [4, "+", "device", "Eingang 1"],
  [4, "+", "device", "Eingang 3"],
  [4, "+", "device", "Eingang 4"],
  [4, "", "ref", "PY1 1.2A"],
  [2, "+", "bin", "Kopierkorb"],
  [2, "", "link", "INFO PCN.1A"],
  [2, "", "link", "SM BSTL.1A"],
  [1, "+", "func", "Funktionen"],
  [1, "-", "docs", "Dokumente"],
  [2, "+", "sheets", "INFO"],
  [2, "+", "sheets", "LAYOUT"],
  [2, "-", "sheets", "PY1"],
  [3, "+", "user", "1"],
  [3, "+", "sheet", "100"],
  [3, "+", "sheet", "303"],
  [3, "+", "sheet", "304"],
  [3, "+", "sheet", "305"],
  [3, "+", "sheet", "312"],
  [3, "+", "list", "BSTL"],
  [3, "+", "list", "KAP"],
  [3, "+", "list", "KZL"],
  [3, "+", "sheet", "SICH. +S1"],
  [3, "+", "list", "STLD"],
  [3, "+", "list", "ZRL"],
  [2, "+", "sheets", "SM"],
  [2, "+", "bin", "Kopierkorb"],
  [2, "", "link", "INFO INFO.1A"],
  [1, "+", "hint", "Hinweise"],
  [1, "+", "templ", "Vorlagen"]
];

document.getElementById("tree").innerHTML = nodes.map(([level, sign, icon, label]) => {
  const box = level === 0 ? "" : `<i class="box${sign ? "" : " none"}">${sign === "-" ? "−" : "+"}</i>`;
  const picked = label === "Eingang 3" ? " picked" : "";
  return `<li class="lv${level}">${box}<svg class="ic"><use href="#t-${icon}"/></svg><span class="name${picked}">${label}</span></li>`;
}).join("");

// Rulers: 3px per unit, label every 20 units
function tickPath(size, line) {
  let d = "";
  for (let u = 0; u < 20; u++) {
    let len = u % 2 ? 4 : 6;
    if (u === 10) len = 10;
    if (u === 0) len = size;
    d += line(u * 3 + 0.5, len);
  }
  return d;
}
document.getElementById("htickpath").setAttribute("d", tickPath(17, (p, len) => `M${p} 17v-${len}`));
document.getElementById("vtickpath").setAttribute("d", tickPath(16, (p, len) => `M16 ${p}h-${len}`));

let h = "";
for (let v = -120; v <= 320; v += 20) {
  h += `<text x="${375 + v * 3 + 1}" y="9">${v}</text>`;
}
document.getElementById("hruler").insertAdjacentHTML("beforeend", h);

let w = "";
for (let v = 280; v >= 40; v -= 20) {
  w += `<text transform="translate(9 ${35 + (280 - v) * 3 + 2}) rotate(-90)" text-anchor="end">${v}</text>`;
}
document.getElementById("vruler").insertAdjacentHTML("beforeend", w);
```
